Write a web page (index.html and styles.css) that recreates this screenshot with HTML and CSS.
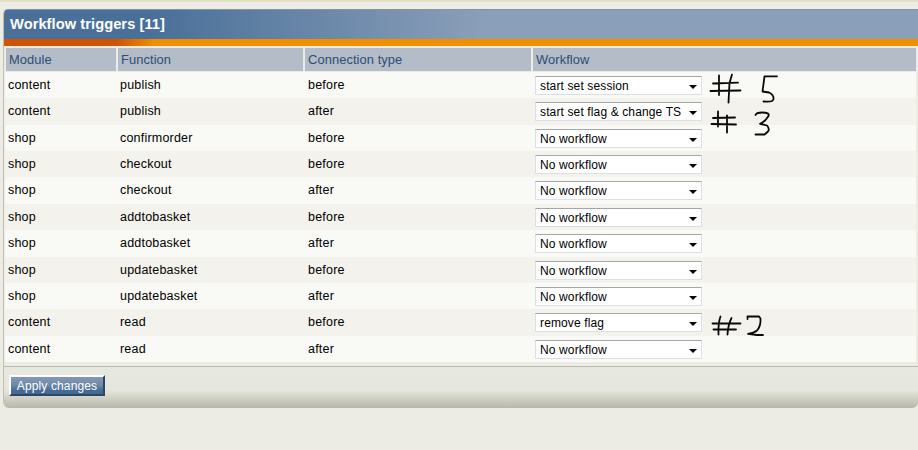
FILE: index.html
```html
<!DOCTYPE html>
<html lang="en">
<head>
<meta charset="utf-8">
<title>Workflow triggers</title>
<link rel="stylesheet" href="styles.css">
</head>
<body>
<main class="panel">
<h1 class="title">Workflow triggers [11]</h1>
<div class="stripe"></div>
<div class="list">
<div class="row head"><span>Module</span><span>Function</span><span>Connection type</span><span>Workflow</span></div>
<div class="row"><span>content</span><span>publish</span><span>before</span><div class="select">start set session</div></div>
<div class="row alt tall"><span>content</span><span>publish</span><span>after</span><div class="select">start set flag &amp; change TS</div></div>
<div class="row"><span>shop</span><span>confirmorder</span><span>before</span><div class="select">No workflow</div></div>
<div class="row alt"><span>shop</span><span>checkout</span><span>before</span><div class="select">No workflow</div></div>
<div class="row tall"><span>shop</span><span>checkout</span><span>after</span><div class="select">No workflow</div></div>
<div class="row alt"><span>shop</span><span>addtobasket</span><span>before</span><div class="select">No workflow</div></div>
<div class="row tall"><span>shop</span><span>addtobasket</span><span>after</span><div class="select">No workflow</div></div>
<div class="row alt"><span>shop</span><span>updatebasket</span><span>before</span><div class="select">No workflow</div></div>
<div class="row"><span>shop</span><span>updatebasket</span><span>after</span><div class="select">No workflow</div></div>
<div class="row alt tall"><span>content</span><span>read</span><span>before</span><div class="select">remove flag</div></div>
<div class="row"><span>content</span><span>read</span><span>after</span><div class="select">No workflow</div></div>
</div>
<footer class="footer"><button class="apply">Apply changes</button></footer>
</main>
<svg class="ink" width="918" height="450" viewBox="0 0 918 450">
<path d="M719 75.500V95M732 74.500L729.500 83L728.500 102.500M713 83.500L738 82.700M710.500 91L740.500 90.500"/>
<path d="M777 76.300H764.500L762.500 91.500L769 92.500Q774 95 773.500 99Q773 102.500 763.500 101.500"/>
<path d="M718 111.500V126.500M727 115.500V132.500M713 118L735 117.500M711.500 124L736 124.500"/>
<path d="M755.500 115Q756.500 112.500 762 112.500Q770 112.500 768.500 116Q765 122 760 123.800L767 125.500Q770 129 768 131.500L764.500 134.500H755.500"/>
<path d="M720.500 316.500Q718 323 718.500 334.500M731.500 318Q728 325 727.500 334.500M712.500 323.500H740.500M713.500 329.500H736"/>
<path d="M747.500 319V316.500H759L760.500 318.500Q761 326 757 330.500Q754 333 748 333.800L757 335H763"/>
</svg>
</body>
</html>
```

FILE: styles.css
```css
* { box-sizing: border-box; }
body {
  margin: 0;
  width: 918px;
  height: 450px;
  overflow: hidden;
  padding: 9px 0 0 3px;
  background: linear-gradient(#e2e0c9 0 2px, #ecece4 2px);
  font: 12.5px "Liberation Sans", Arial, sans-serif;
  letter-spacing: .2px;
  color: #000;
}
.panel {
  height: 399px;
  border-left: 1px solid #bfc0b6;
  border-radius: 5px 0 6px 6px;
  overflow: hidden;
  background: #ecece5;
}
.title {
  margin: 0;
  height: 30px;
  padding: 0 0 0 6px;
  border-top: 1px solid #8795a3;
  background: linear-gradient(90deg, #4a7099 0, #4a7099 150px, #8a9fb9 480px);
  color: #fff;
  font-size: 14.67px;
  letter-spacing: .06px;
  line-height: 29px;
}
.stripe {
  height: 7px;
  background: linear-gradient(90deg, #cf5300 0, #cf5300 112px, #f18f00 150px);
}
.list { padding: 2px 2px 0 1px; }
.row {
  display: grid;
  grid-template-columns: 112px 188px 227px 1fr;
  align-items: start;
  height: 26px;
  background: #f9f9f5;
}
.row.alt { background: #f4f2ec; }
.row.tall { height: 27px; }
.row > span { padding-left: 3px; line-height: 26px; }
.row .select { margin: 4px 0 0 3px; }
.row.head {
  grid-template-columns: 110px 185px 226px 1fr;
  column-gap: 2px;
  height: 24px;
  padding-left: 1px;
  background: #ecece5;
  color: #2f4c72;
  font-size: 12.9px;
  letter-spacing: .08px;
}
.row.head > span { height: 23px; line-height: 23px; background: #b4bcc7; }
.select {
  display: flex;
  align-items: center;
  justify-content: space-between;
  width: 167px;
  height: 19px;
  padding: 0 4px 0 4px;
  border: 1px solid #dcdfe5;
  border-top-color: #a5a6aa;
  background: #fff;
  font-size: 12px;
  letter-spacing: .13px;
  white-space: nowrap;
}
.select::after {
  content: "";
  margin-top: 3px;
  border: 4px solid transparent;
  border-top-color: #000;
  border-bottom: 0;
}
.footer {
  height: 42px;
  margin-top: 4px;
  padding: 8px 0 0 5px;
  border-top: 1px solid #b9bab0;
  background: linear-gradient(#e7e8e0 0, #e5e6dd 23px, #b8b7aa 41px);
}
.apply {
  display: block;
  width: 96px;
  height: 21px;
  padding: 0;
  border: 2px solid;
  border-color: #fff #2c4766 #2c4766 #fff;
  background: linear-gradient(#8299b5, #6f8baa 45%, #456b95 80%);
  color: #fff;
  font: 12px "Liberation Sans", Arial, sans-serif;
  letter-spacing: .12px;
}
.ink {
  position: absolute;
  top: 0;
  left: 0;
  fill: none;
  stroke: #080808;
  stroke-width: 1.8;
  stroke-linecap: round;
  stroke-linejoin: round;
  pointer-events: none;
}
```
